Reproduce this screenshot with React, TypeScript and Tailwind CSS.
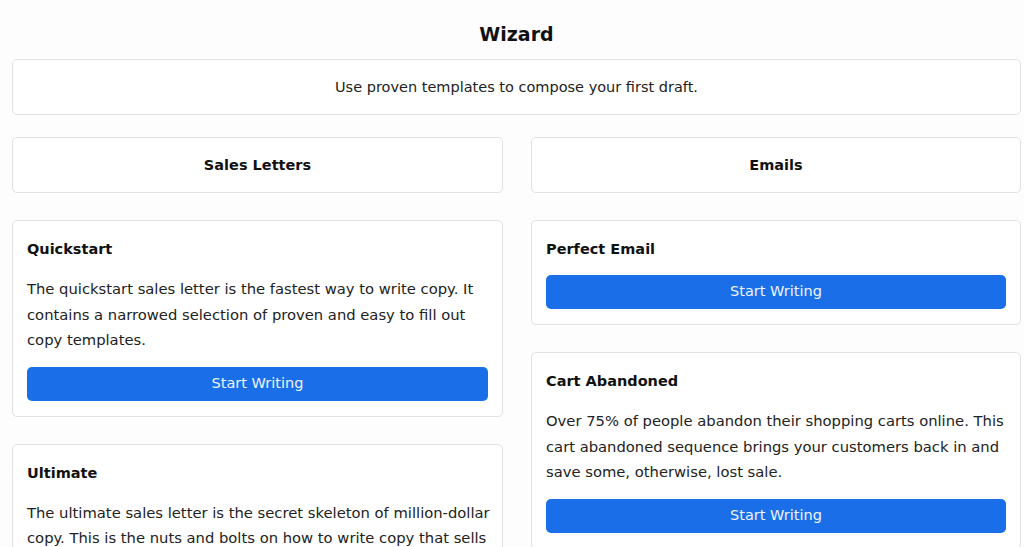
import React from "react";

const font = { fontFamily: '"DejaVu Sans", Verdana, sans-serif' };

function Card({ title, text }: { title: string; text?: React.ReactNode }) {
  return (
    <div className="flex flex-col rounded-[5px] border border-[#e2e2e2] bg-white pb-[15px] pl-[14px] pr-[14px] pt-[16px]">
      <div className="text-[14.5px] font-bold leading-[24px] text-[#111]">{title}</div>
      {text && <p className="mr-[-8px] mt-[15px] text-[14.75px] leading-[25.5px] text-[#222]">{text}</p>}
      <button className="mt-[14px] flex h-[34px] w-full items-center justify-center rounded-[5px] bg-[#1a6fe8] text-[14.5px] text-[#eef4ff]">
        Start Writing
      </button>
    </div>
  );
}

function Header({ label }: { label: string }) {
  return (
    <div className="flex h-[56px] items-center justify-center rounded-[5px] border border-[#e2e2e2] bg-white pt-[2px] text-[14.5px] font-bold text-[#111]">
      {label}
    </div>
  );
}

export default function App() {
  return (
    <div className="min-h-screen bg-[#fdfdfd] pl-[12px] pr-[3px]" style={font}>
      <h1 className="pt-[22px] text-center text-[19px] font-bold leading-[24px] text-[#111]">Wizard</h1>
      <div className="mt-[13px] rounded-[5px] border border-[#e2e2e2] bg-white py-[14px] text-center text-[14.5px] leading-[26px] text-[#222]">
        Use proven templates to compose your first draft.
      </div>
      <div className="mt-[22px] grid grid-cols-[491px_490px] gap-x-[28px] pb-8">
        <div className="flex flex-col gap-[27px]">
          <Header label="Sales Letters" />
          <Card
            title="Quickstart"
            text="The quickstart sales letter is the fastest way to write copy. It contains a narrowed selection of proven and easy to fill out copy templates."
          />
          <Card
            title="Ultimate"
            text={
              <>
                The ultimate sales letter is the secret skeleton of{" "}
                <span className="whitespace-nowrap">million-dollar</span> copy. This is the nuts and bolts on how to
                write copy that sells like crazy.
              </>
            }
          />
        </div>
        <div className="flex flex-col gap-[27px]">
          <Header label="Emails" />
          <Card title="Perfect Email" />
          <Card
            title="Cart Abandoned"
            text="Over 75% of people abandon their shopping carts online. This cart abandoned sequence brings your customers back in and save some, otherwise, lost sale."
          />
        </div>
      </div>
    </div>
  );
}
